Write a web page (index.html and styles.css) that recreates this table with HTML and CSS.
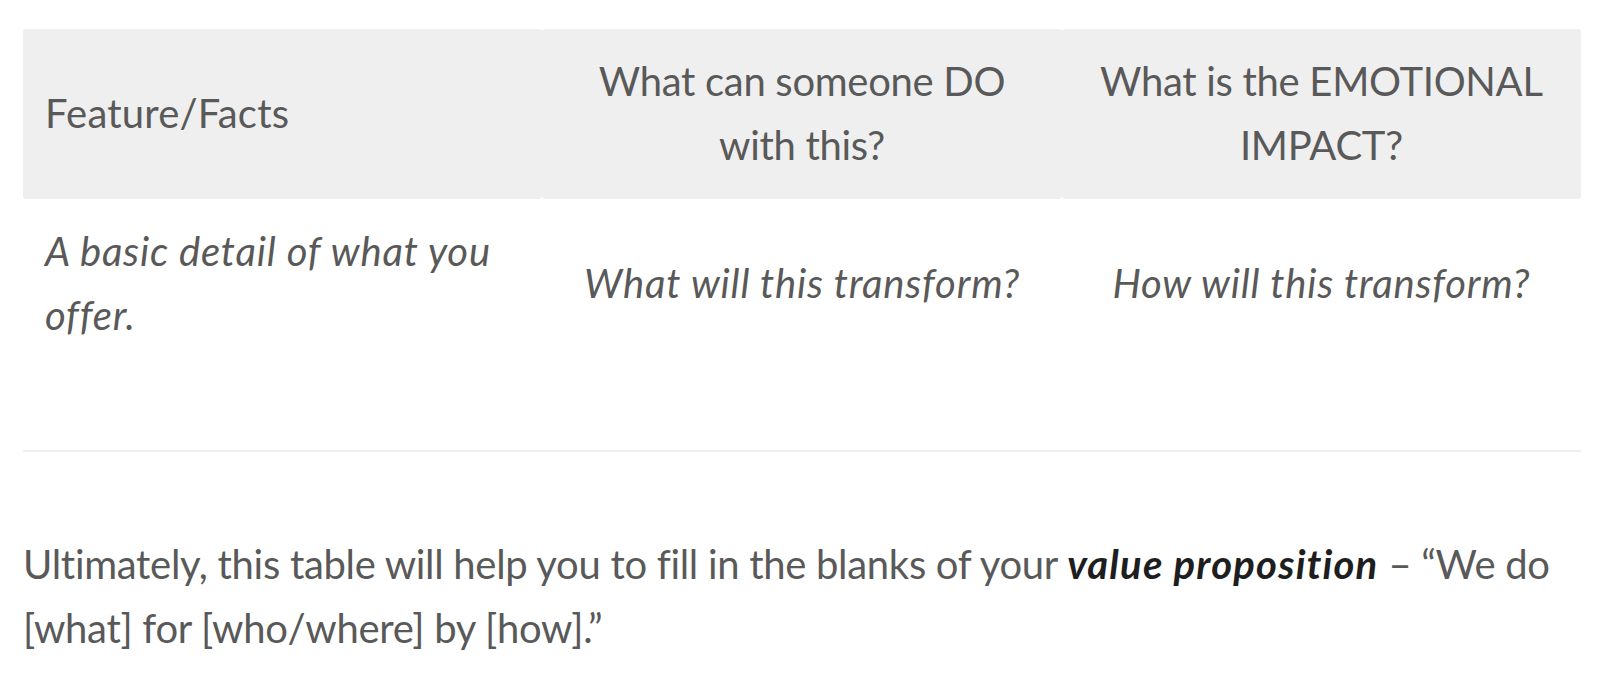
FILE: index.html
```html
<!DOCTYPE html>
<html lang="en">
<head>
<meta charset="utf-8">
<title>Value proposition table</title>
<link rel="stylesheet" href="styles.css">
</head>
<body>
<main class="content">
  <table class="facts">
    <thead>
      <tr>
        <th class="left">Feature/Facts</th>
        <th>What can someone DO with this?</th>
        <th>What is the EMOTIONAL IMPACT?</th>
      </tr>
    </thead>
    <tbody>
      <tr>
        <td class="left"><em>A basic detail of what you offer.</em></td>
        <td><em>What will this transform?</em></td>
        <td><em>How will this transform?</em></td>
      </tr>
    </tbody>
  </table>
  <hr class="divider">
  <p class="para">Ultimately, this table will help you to fill in the blanks of your <strong><em>value proposition</em></strong> – “We do [what] for [who/where] by [how].”</p>
</main>
</body>
</html>
```

FILE: styles.css
```css
html, body {
  margin: 0;
  padding: 0;
  background: #ffffff;
}

body {
  font-family: Lato, "Open Sans", "Liberation Sans", sans-serif;
  font-size: 40px;
  line-height: 64px;
  color: #595959;
  letter-spacing: -0.3px;
}

.content {
  width: 1558px;
  padding: 29px 0 0 23px;
}

.facts {
  width: 100%;
  table-layout: fixed;
  border-collapse: separate;
  border-spacing: 0;
}

.facts th {
  background: #efefef;
  font-weight: 400;
  text-align: center;
  vertical-align: middle;
  padding: 20px 22px 22px;
  border-radius: 3px;
}

.facts td {
  text-align: center;
  vertical-align: middle;
  padding: 20px 22px;
}

.facts .left {
  text-align: left;
}

.facts th.left {
  letter-spacing: 0.2px;
}

.facts em {
  letter-spacing: 0.8px;
}

.divider {
  border: 0;
  height: 2px;
  background: #eeeeee;
  margin: 83px 0 0;
}

.para {
  margin: 80px 0 0;
}

.para strong {
  font-weight: 700;
  color: #1e1e1e;
}

.para strong em {
  letter-spacing: 1.2px;
}
```
